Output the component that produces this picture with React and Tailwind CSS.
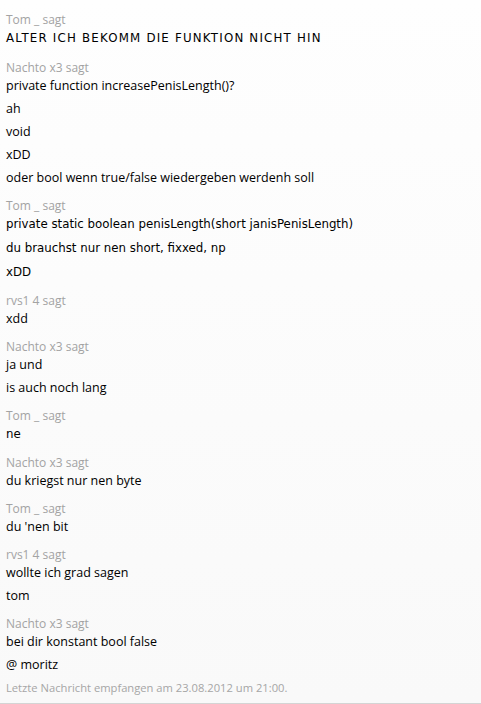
import React from 'react';

const SEGOE = "font-['Segoe_UI','Open_Sans','Noto_Sans',sans-serif]";
const COMIC = "font-['Comic_Sans_MS','DejaVu_Sans',sans-serif] text-[11.8px] leading-[19px]";

const blocks = [
  { name: 'Tom _ sagt', comic: true, caps: true, lines: ['ALTER ICH BEKOMM DIE FUNKTION NICHT HIN'] },
  {
    name: 'Nachto x3 sagt',
    lines: ['private function increasePenisLength()?', 'ah', 'void', 'xDD', 'oder bool wenn true/false wiedergeben werdenh soll'],
  },
  {
    name: 'Tom _ sagt',
    comic: true,
    lines: ['private static boolean penisLength(short janisPenisLength)', 'du brauchst nur nen short, fixxed, np', 'xDD'],
  },
  { name: 'rvs1 4 sagt', lines: ['xdd'] },
  { name: 'Nachto x3 sagt', lines: ['ja und', 'is auch noch lang'] },
  { name: 'Tom _ sagt', comic: true, lines: ['ne'] },
  { name: 'Nachto x3 sagt', lines: ['du kriegst nur nen byte'] },
  { name: 'Tom _ sagt', lines: ["du 'nen bit"] },
  { name: 'rvs1 4 sagt', lines: ['wollte ich grad sagen', 'tom'] },
  { name: 'Nachto x3 sagt', lines: ['bei dir konstant bool false', '@ moritz'] },
];

const App = () => {
  return (
    <div className={`w-[481px] h-[704px] bg-gradient-to-b from-[#fefefe] to-[#f9f9f9] border-b border-[#d4d4d4] ${SEGOE} text-[12px] overflow-hidden`}>
      <div className="flex flex-col gap-[10px] pl-[6px] pt-[11px]">
        {blocks.map((b, i) => (
          <div key={i} className={`flex flex-col ${i === 0 ? 'pb-[1px]' : ''}`}>
            <div className="leading-[18px] text-[#a3a3a3]">{b.name}</div>
            <div className="flex flex-col gap-[5px]">
              {b.lines.map((l, j) => (
                <div
                  key={j}
                  className={`text-black ${b.comic ? COMIC : 'text-[12.5px] leading-[18px]'} ${b.caps ? 'tracking-[1.2px]' : ''}`}
                >
                  {l}
                </div>
              ))}
            </div>
          </div>
        ))}
      </div>
      <div className="pl-[6px] pt-[6px] leading-[16px] text-[11.2px] text-[#a6a6a6]">
        Letzte Nachricht empfangen am 23.08.2012 um 21:00.
      </div>
    </div>
  );
};

export default App;
